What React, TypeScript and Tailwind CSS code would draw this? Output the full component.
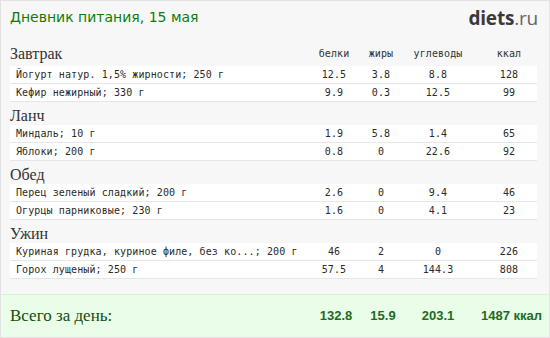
import React from 'react';

const meals = [
  {
    title: 'Завтрак',
    items: [
      ['Йогурт натур. 1,5% жирности; 250 г', '12.5', '3.8', '8.8', '128'],
      ['Кефир нежирный; 330 г', '9.9', '0.3', '12.5', '99'],
    ],
  },
  {
    title: 'Ланч',
    items: [
      ['Миндаль; 10 г', '1.9', '5.8', '1.4', '65'],
      ['Яблоки; 200 г', '0.8', '0', '22.6', '92'],
    ],
  },
  {
    title: 'Обед',
    items: [
      ['Перец зеленый сладкий; 200 г', '2.6', '0', '9.4', '46'],
      ['Огурцы парниковые; 230 г', '1.6', '0', '4.1', '23'],
    ],
  },
  {
    title: 'Ужин',
    items: [
      ['Куриная грудка, куриное филе, без ко...; 200 г', '46', '2', '0', '226'],
      ['Горох лущеный; 250 г', '57.5', '4', '144.3', '808'],
    ],
  },
];

const grid = 'grid grid-cols-[300px_48px_46px_68px_9px_56px]';
const mono = "font-['DejaVu_Sans_Mono',monospace] text-[10px] tracking-[0.1px]";
const serif = "font-['Liberation_Serif',serif]";

export default function App() {
  return (
    <div className="w-[550px] h-[338px] bg-[#f7f7f7] border border-[#e2e2e2] flex flex-col overflow-hidden">
      {/* шапка */}
      <header className="h-[42px] flex justify-between items-start pl-[9px] pr-[11px] pt-[6px]">
        <h1 className="font-['DejaVu_Sans',sans-serif] text-[14px] leading-[20px] text-[#0b7d0b]">
          Дневник питания, 15 мая
        </h1>
        <div className="font-['Open_Sans',sans-serif] text-[19px] leading-[22px] text-[#3a3a3a] tracking-[-0.2px]">
          <span className="font-bold">diets</span>
          <span className="text-[#666]">.ru</span>
        </div>
      </header>

      {/* приемы пищи */}
      <div className="ml-[9px] w-[527px]">
        {meals.map((meal, i) => (
          <section key={meal.title}>
            <div className={`${grid} h-[23px] items-center`}>
              <h2 className={`${serif} text-[16px] leading-[18px] text-[#333] ${i === 0 ? '-mt-[2px]' : 'mt-[4px]'}`}>
                {meal.title}
              </h2>
              {i === 0 && (
                <>
                  <span className={`${mono} text-center text-[#333] -mt-[2px]`}>белки</span>
                  <span className={`${mono} text-center text-[#333] -mt-[2px]`}>жиры</span>
                  <span className={`${mono} text-center text-[#333] -mt-[2px]`}>углеводы</span>
                  <span />
                  <span className={`${mono} text-center text-[#333] -mt-[2px]`}>ккал</span>
                </>
              )}
            </div>
            {meal.items.map((row) => (
              <div
                key={row[0]}
                className={`${grid} ${mono} h-[18px] items-center bg-white border-b border-[#e6e6e6] text-[#2a2a2a]`}
              >
                <span className="pl-[6px] whitespace-nowrap">{row[0]}</span>
                <span className="text-center">{row[1]}</span>
                <span className="text-center">{row[2]}</span>
                <span className="text-center">{row[3]}</span>
                <span />
                <span className="text-center">{row[4]}</span>
              </div>
            ))}
          </section>
        ))}
      </div>

      {/* итого */}
      <div className="mt-[15px] flex-1 bg-[#e9fde9] border-t border-[#dcefdc] flex items-center">
        <div className={`${grid} ml-[9px] w-[527px] items-center`}>
          <span className={`${serif} text-[17px] text-[#0f4f0f]`}>Всего за день:</span>
          <span className="font-['Liberation_Sans',sans-serif] font-bold text-[13px] text-center text-[#1f6b1f] pl-[4px]">132.8</span>
          <span className="font-['Liberation_Sans',sans-serif] font-bold text-[13px] text-center text-[#1f6b1f] pl-[4px]">15.9</span>
          <span className="font-['Liberation_Sans',sans-serif] font-bold text-[13px] text-center text-[#1f6b1f]">203.1</span>
          <span />
          <span className="font-['Liberation_Sans',sans-serif] font-bold text-[13px] text-right text-[#1f6b1f] whitespace-nowrap">1487 ккал</span>
        </div>
      </div>
    </div>
  );
}
